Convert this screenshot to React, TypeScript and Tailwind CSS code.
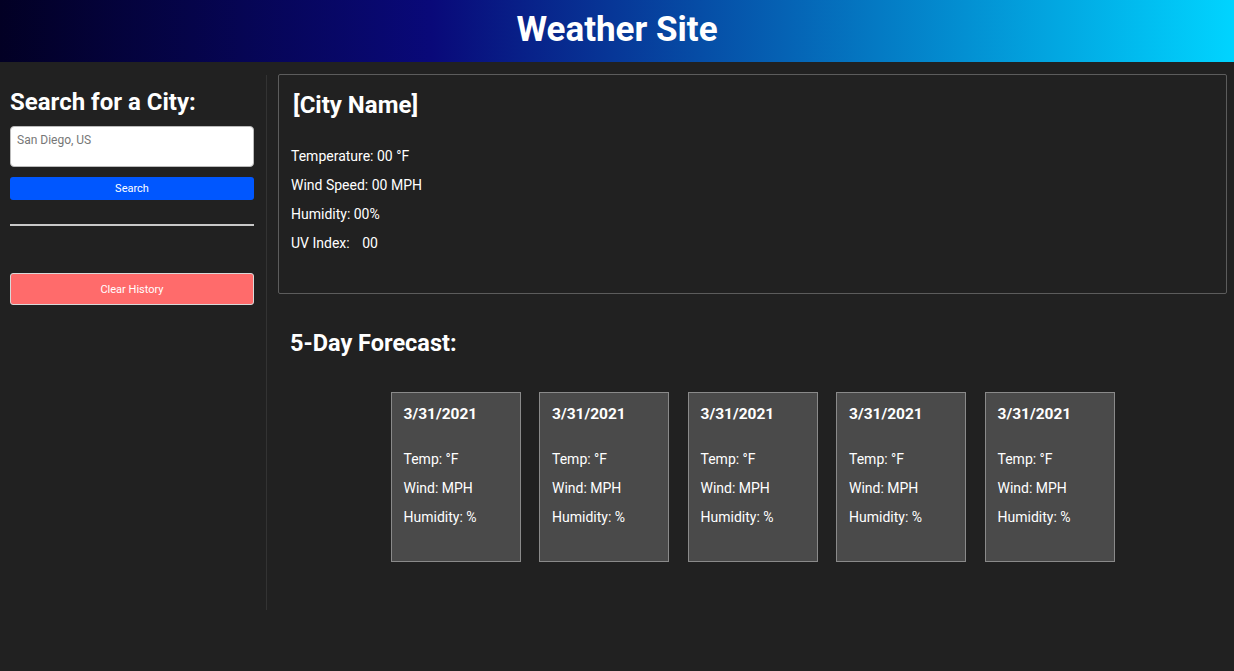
import React from 'react'

const days = ['3/31/2021', '3/31/2021', '3/31/2021', '3/31/2021', '3/31/2021']

const ForecastCard: React.FC<{ date: string }> = ({ date }) => (
  <div className="w-[130px] h-[170px] bg-[#4a4a4a] border border-[#8a8a8a] px-3 pt-[10px] text-white">
    <h3 className="text-[15.5px] font-bold leading-[22px] mb-[26px]">{date}</h3>
    <p className="text-[14px] leading-[17px] mb-[12px]">Temp: °F</p>
    <p className="text-[14px] leading-[17px] mb-[12px]">Wind: MPH</p>
    <p className="text-[14px] leading-[17px]">Humidity: %</p>
  </div>
)

export default function App() {
  return (
    <div className="min-h-[671px] bg-[#212121] text-white font-['Roboto',sans-serif]">
      <header className="h-[62px] flex items-center justify-center bg-[linear-gradient(90deg,#020024_0%,#090979_35%,#00d4ff_100%)]">
        <h1 className="text-[35px] font-bold leading-none -mt-[3px]">Weather Site</h1>
      </header>

      <div className="flex">
        <aside className="w-[267px] shrink-0 pl-[10px] pr-[12px] border-r border-[#333] h-[535px] mt-[13px]">
          <div className="pt-[12px]">
            <h2 className="text-[24px] font-bold leading-[30px] mb-[9px]">Search for a City:</h2>
            <textarea
              readOnly
              placeholder="San Diego, US"
              className="block w-[244px] h-[41px] bg-white rounded-[4px] border border-[#bbb] px-[6px] pt-[5px] text-[12px] leading-[16px] text-[#333] placeholder:text-[#777] resize-none outline-none"
            />
            <button className="block w-[244px] h-[23px] mt-[10px] bg-[#0057ff] rounded-[3px] text-[11px] text-white leading-none">
              Search
            </button>
            <hr className="w-[244px] mt-[24px] border-0 border-t-2 border-[#c8c8c8]" />
            <button className="block w-[244px] h-[32px] mt-[47px] bg-[#ff6b6b] border border-[#d9d9d9] rounded-[3px] text-[11px] text-white leading-none">
              Clear History
            </button>
          </div>
        </aside>

        <main className="flex-1 pl-[11px] pr-[7px] pt-[12px]">
          <section className="h-[220px] border border-[#5c5c5c] rounded-[2px] pl-[12px] pt-[14px]">
            <h2 className="text-[24px] font-bold leading-[32px] ml-[2px] mb-[27px]">[City Name]</h2>
            <p className="text-[14px] leading-[17px] mb-[12px]">Temperature: 00 °F</p>
            <p className="text-[14px] leading-[17px] mb-[12px]">Wind Speed: 00 MPH</p>
            <p className="text-[14px] leading-[17px] mb-[12px]">Humidity: 00%</p>
            <p className="text-[14px] leading-[17px]">
              UV Index: <span className="ml-[9px]">00</span>
            </p>
          </section>

          <h2 className="text-[23.5px] font-bold leading-[28px] mt-[35px] ml-[12px]">5-Day Forecast:</h2>

          <div className="flex justify-center gap-[18.5px] mt-[35px]">
            {days.map((d, i) => (
              <ForecastCard key={i} date={d} />
            ))}
          </div>
        </main>
      </div>
    </div>
  )
}
